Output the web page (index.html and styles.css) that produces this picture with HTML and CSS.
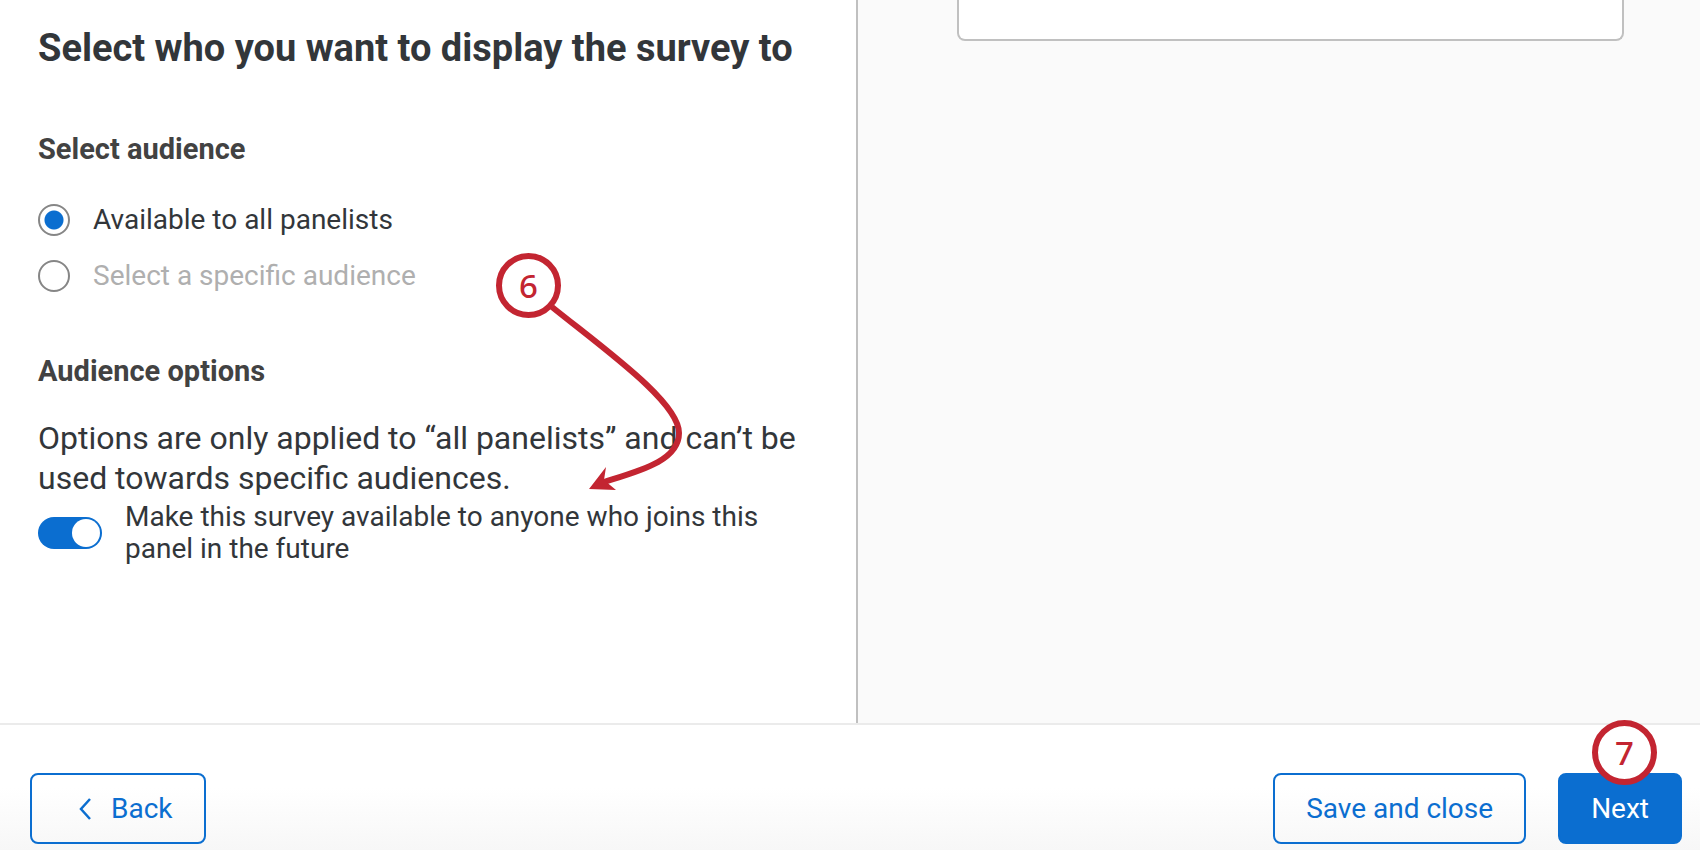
FILE: index.html
```html
<!DOCTYPE html>
<html lang="en">
<head>
  <meta charset="UTF-8">
  <meta name="viewport" content="width=device-width, initial-scale=1.0">
  <title>Survey audience</title>
  <link rel="stylesheet" href="styles.css">
</head>
<body>
  <main class="workspace">
    <form class="audience-panel" id="audience-form">
      <h1>Select who you want to display the survey to</h1>

      <h2 id="audience-title">Select audience</h2>
      <div class="radio-group" role="radiogroup" aria-labelledby="audience-title">
        <label class="radio-option">
          <input type="radio" name="audience" value="all" checked>
          <span>Available to all panelists</span>
        </label>
        <label class="radio-option disabled">
          <input type="radio" name="audience" value="specific" disabled>
          <span>Select a specific audience</span>
        </label>
      </div>

      <h2 class="options-title">Audience options</h2>
      <p>Options are only applied to “all panelists” and can’t be used towards specific audiences.</p>
      <label class="toggle-option">
        <input type="checkbox" role="switch" name="future" checked>
        <span>Make this survey available to anyone who joins this panel in the future</span>
      </label>

      <!-- Step 6 pointer -->
      <svg class="pointer" width="240" height="250" viewBox="490 247 240 250" aria-hidden="true">
        <path class="pointer-line" d="M552 307 C604 349 679 402 679 433 C679 461 639 471 604 482"/>
        <path class="pointer-head" d="M589 489 L606 467 L604 480 L616 490 Z"/>
      </svg>
      <span class="step step-six">6</span>
    </form>

    <section class="preview-panel" aria-label="Preview">
      <div class="preview-card"></div>
    </section>
  </main>

  <footer class="footer">
    <button class="btn btn-back" type="button">
      <svg width="12" height="22" viewBox="0 0 12 22" aria-hidden="true">
        <path d="M11 1 L2 11 L11 21"/>
      </svg>
      Back
    </button>
    <button class="btn btn-save" type="button">Save and close</button>
    <div class="next-wrap">
      <button class="btn btn-primary" type="submit" form="audience-form">Next</button>
      <span class="step step-seven">7</span>
    </div>
  </footer>
</body>
</html>
```
FILE: styles.css
```css
:root {
  --blue: #0b6ed0;
  --red: #c32531;
  --text-main: #32363a;
  --text-title: #424242;
  --text-disabled: #afafaf;
  --border: #c0c0c0;
  --panel-bg: #fafafa;
}

* {
  box-sizing: border-box;
  margin: 0;
  padding: 0;
}

body {
  display: flex;
  flex-direction: column;
  min-height: 100vh;
  font-family: Roboto, "Liberation Sans", sans-serif;
  font-size: 28px;
  line-height: 32px;
  color: var(--text-main);
  background-color: #fff;
}

.workspace {
  flex: 1;
  display: flex;
}

.audience-panel {
  position: relative;
  width: calc(50% + 8px);
  padding: 28px 60px 64px 38px;
  border-right: 2px solid var(--border);
}

h1 {
  margin-bottom: 65px;
  font-size: 38px;
  line-height: 40px;
  font-weight: 700;
  white-space: nowrap;
}

h2 {
  margin-bottom: 39px;
  font-size: 29px;
  font-weight: 700;
  color: var(--text-title);
}

.radio-group {
  display: flex;
  flex-direction: column;
  gap: 24px;
  margin-bottom: 63px;
}

.radio-option {
  display: flex;
  align-items: center;
  gap: 23px;
}

.radio-option input {
  appearance: none;
  flex: none;
  width: 32px;
  height: 32px;
  border: 2px solid #868686;
  border-radius: 50%;
  background-color: #fff;
}

.radio-option input:checked {
  background-image: radial-gradient(circle, var(--blue) 9px, transparent 10px);
}

.disabled {
  color: var(--text-disabled);
}

.options-title {
  margin-bottom: 31px;
}

p {
  margin-bottom: 3px;
  font-size: 32px;
  line-height: 40px;
}

.toggle-option {
  display: flex;
  align-items: center;
  gap: 23px;
}

.toggle-option input {
  appearance: none;
  display: flex;
  flex: none;
  width: 64px;
  height: 32px;
  padding: 2px;
  border-radius: 16px;
  background-color: #b0b0b0;
}

.toggle-option input::before {
  content: "";
  width: 28px;
  height: 28px;
  border-radius: 50%;
  background-color: #fff;
}

.toggle-option input:checked {
  justify-content: flex-end;
  background-color: var(--blue);
}

.preview-panel {
  flex: 1;
  padding: 0 76px 0 99px;
  background-color: var(--panel-bg);
}

.preview-card {
  height: 41px;
  border: 2px solid var(--border);
  border-top: none;
  border-radius: 0 0 8px 8px;
  background-color: #fff;
}

.footer {
  display: flex;
  gap: 32px;
  padding: 48px 18px 6px 30px;
  border-top: 2px solid #ebebeb;
  background: linear-gradient(#fff 50%, #f7f7f7);
}

.btn {
  display: flex;
  align-items: center;
  justify-content: center;
  height: 71px;
  padding: 0 31px;
  border: 2px solid var(--blue);
  border-radius: 8px;
  font: inherit;
  color: var(--blue);
  background-color: transparent;
  cursor: pointer;
}

.btn-back {
  gap: 20px;
  padding-left: 47px;
  margin-right: auto;
}

.btn-back path {
  fill: none;
  stroke: var(--blue);
  stroke-width: 2.5;
}

.btn-primary {
  color: #fff;
  background-color: var(--blue);
}

.next-wrap {
  position: relative;
}

/* numbered step callouts */
.step {
  position: absolute;
  display: flex;
  align-items: center;
  justify-content: center;
  width: 65px;
  height: 65px;
  border: 6px solid var(--red);
  border-radius: 50%;
  font-family: "Noto Sans", sans-serif;
  font-size: 33px;
  font-weight: 500;
  color: var(--red);
  background-color: #fff;
}

.step-six {
  top: 253px;
  left: 496px;
}

.step-seven {
  top: -53px;
  right: 25px;
}

.pointer {
  position: absolute;
  top: 247px;
  left: 490px;
}

.pointer-line {
  fill: none;
  stroke: var(--red);
  stroke-width: 6;
}

.pointer-head {
  fill: var(--red);
}
```
